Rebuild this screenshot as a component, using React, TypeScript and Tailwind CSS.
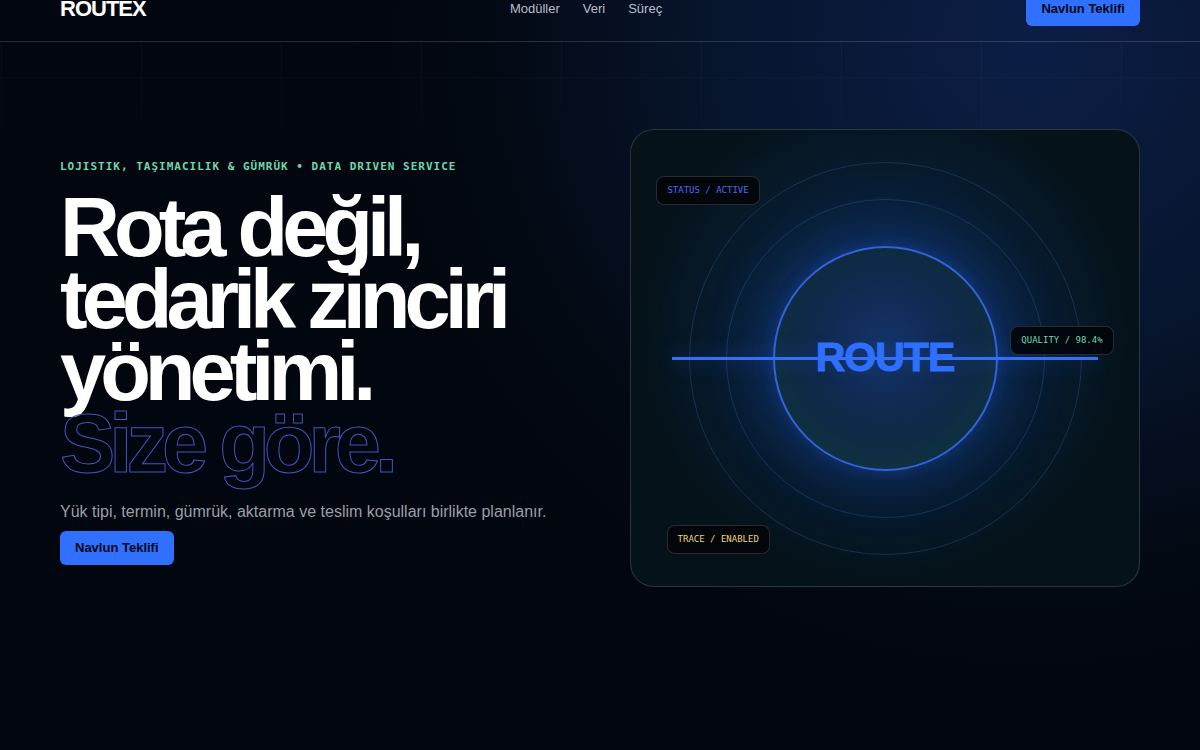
const NAV_LINKS = [
  { label: "Modüller", href: "#moduller" },
  { label: "Veri", href: "#veri" },
  { label: "Süreç", href: "#surec" },
];

const CHIPS = [
  { label: "STATUS / ACTIVE", className: "left-[5%] top-[10%] text-[#4a6bf0]" },
  { label: "QUALITY / 98.4%", className: "right-[5%] top-[43%] text-[#6fd6ae]" },
  { label: "TRACE / ENABLED", className: "left-[7%] bottom-[7%] text-[#f0d27a]" },
];

function QuoteLink() {
  return (
    <a
      href="#teklif"
      className="inline-flex h-[34px] items-center rounded-md bg-[#2f70ff] px-[15px] text-[13px] font-bold whitespace-nowrap text-[#030814]"
    >
      Navlun Teklifi
    </a>
  );
}

function Header() {
  return (
    <header className="relative -mt-6 border-b border-white/15">
      <div className="mx-auto flex h-[65px] max-w-[1080px] items-center justify-between">
        <a href="#" className="text-[22px] font-bold tracking-[-1px] text-white">
          ROUTEX
        </a>
        <nav className="flex gap-[23px] text-[13px] text-[#b9bfca]">
          {NAV_LINKS.map((link) => (
            <a key={link.href} href={link.href}>
              {link.label}
            </a>
          ))}
        </nav>
        <QuoteLink />
      </div>
    </header>
  );
}

function RadarCard() {
  return (
    <div className="relative h-[458px] overflow-hidden rounded-3xl border border-white/15 bg-[#05121a] bg-[radial-gradient(circle_at_50%_45%,rgba(24,84,190,0.4),rgba(20,74,150,0.22)_38%,transparent_68%)]">
      {/* orbit rings */}
      <div className="absolute inset-0 m-auto size-[393px] rounded-full border border-[#4a78d8]/25" />
      <div className="absolute inset-0 m-auto size-[319px] rounded-full border border-[#4a78d8]/25" />

      <div className="absolute inset-0 m-auto flex size-[225px] items-center justify-center rounded-full border-2 border-[#3362dc] bg-[radial-gradient(circle_at_50%_45%,#14346a_0%,#10294f_40%,#0e2a44_58%,#0e3040_72%)] shadow-[0_0_70px_rgba(37,102,255,0.32),0_0_16px_rgba(37,102,255,0.2)]">
        <span className="text-[41px] font-bold tracking-[-1px] text-[#2f70ff] [-webkit-text-stroke:1px_#2f70ff]">
          ROUTE
        </span>
      </div>

      <div className="absolute inset-x-[8%] inset-y-0 my-auto h-[3px] bg-[#2f70ff] shadow-[0_0_20px_rgba(47,112,255,0.55)]" />

      {CHIPS.map((chip) => (
        <span
          key={chip.label}
          className={`absolute rounded-lg border border-white/15 bg-[#02060a]/90 px-2.5 py-[7px] font-['DejaVu_Sans_Mono',monospace] text-[9px] leading-[13px] whitespace-nowrap ${chip.className}`}
        >
          {chip.label}
        </span>
      ))}
    </div>
  );
}

export default function App() {
  return (
    <div className="relative min-h-screen overflow-hidden bg-[#02060e] bg-[radial-gradient(ellipse_680px_660px_at_86%_6%,rgba(36,88,205,0.29),rgba(28,80,175,0.2)_45%,rgba(20,70,120,0.06)_78%,transparent)] font-['Liberation_Sans',Arial,sans-serif]">
      <Header />
      <main className="relative">
        {/* faint survey grid that fades out below the header */}
        <div className="absolute inset-x-0 top-0 h-36 bg-[linear-gradient(to_right,rgba(255,255,255,0.03)_1px,transparent_1px),linear-gradient(to_bottom,rgba(255,255,255,0.03)_1px,transparent_1px)] mask-[linear-gradient(black,transparent)] bg-size-[140px_140px] bg-position-[1px_35px]" />

        <section className="relative mx-auto grid max-w-[1080px] grid-cols-2 items-center gap-[60px] pt-[87px]">
          <div>
            <p className="mb-[9px] font-['DejaVu_Sans_Mono',monospace] text-[11px] leading-8 font-bold tracking-[1px] whitespace-nowrap text-[#6fd6ae]">
              LOJISTIK, TAŞIMACILIK &amp; GÜMRÜK • DATA DRIVEN SERVICE
            </p>
            <h1 className="text-[83px] leading-[72px] font-bold tracking-[-6px] whitespace-nowrap text-white">
              Rota değil,
              <br />
              tedarik zinciri
              <br />
              yönetimi.
              <br />
              <span className="text-transparent [-webkit-text-stroke:1px_#3f57c4]">Size göre.</span>
            </h1>
            <p className="mt-[18px] mb-[5px] text-base leading-7 whitespace-nowrap text-[#9a9fa8]">
              Yük tipi, termin, gümrük, aktarma ve teslim koşulları birlikte planlanır.
            </p>
            <QuoteLink />
          </div>
          <RadarCard />
        </section>
      </main>
    </div>
  );
}
